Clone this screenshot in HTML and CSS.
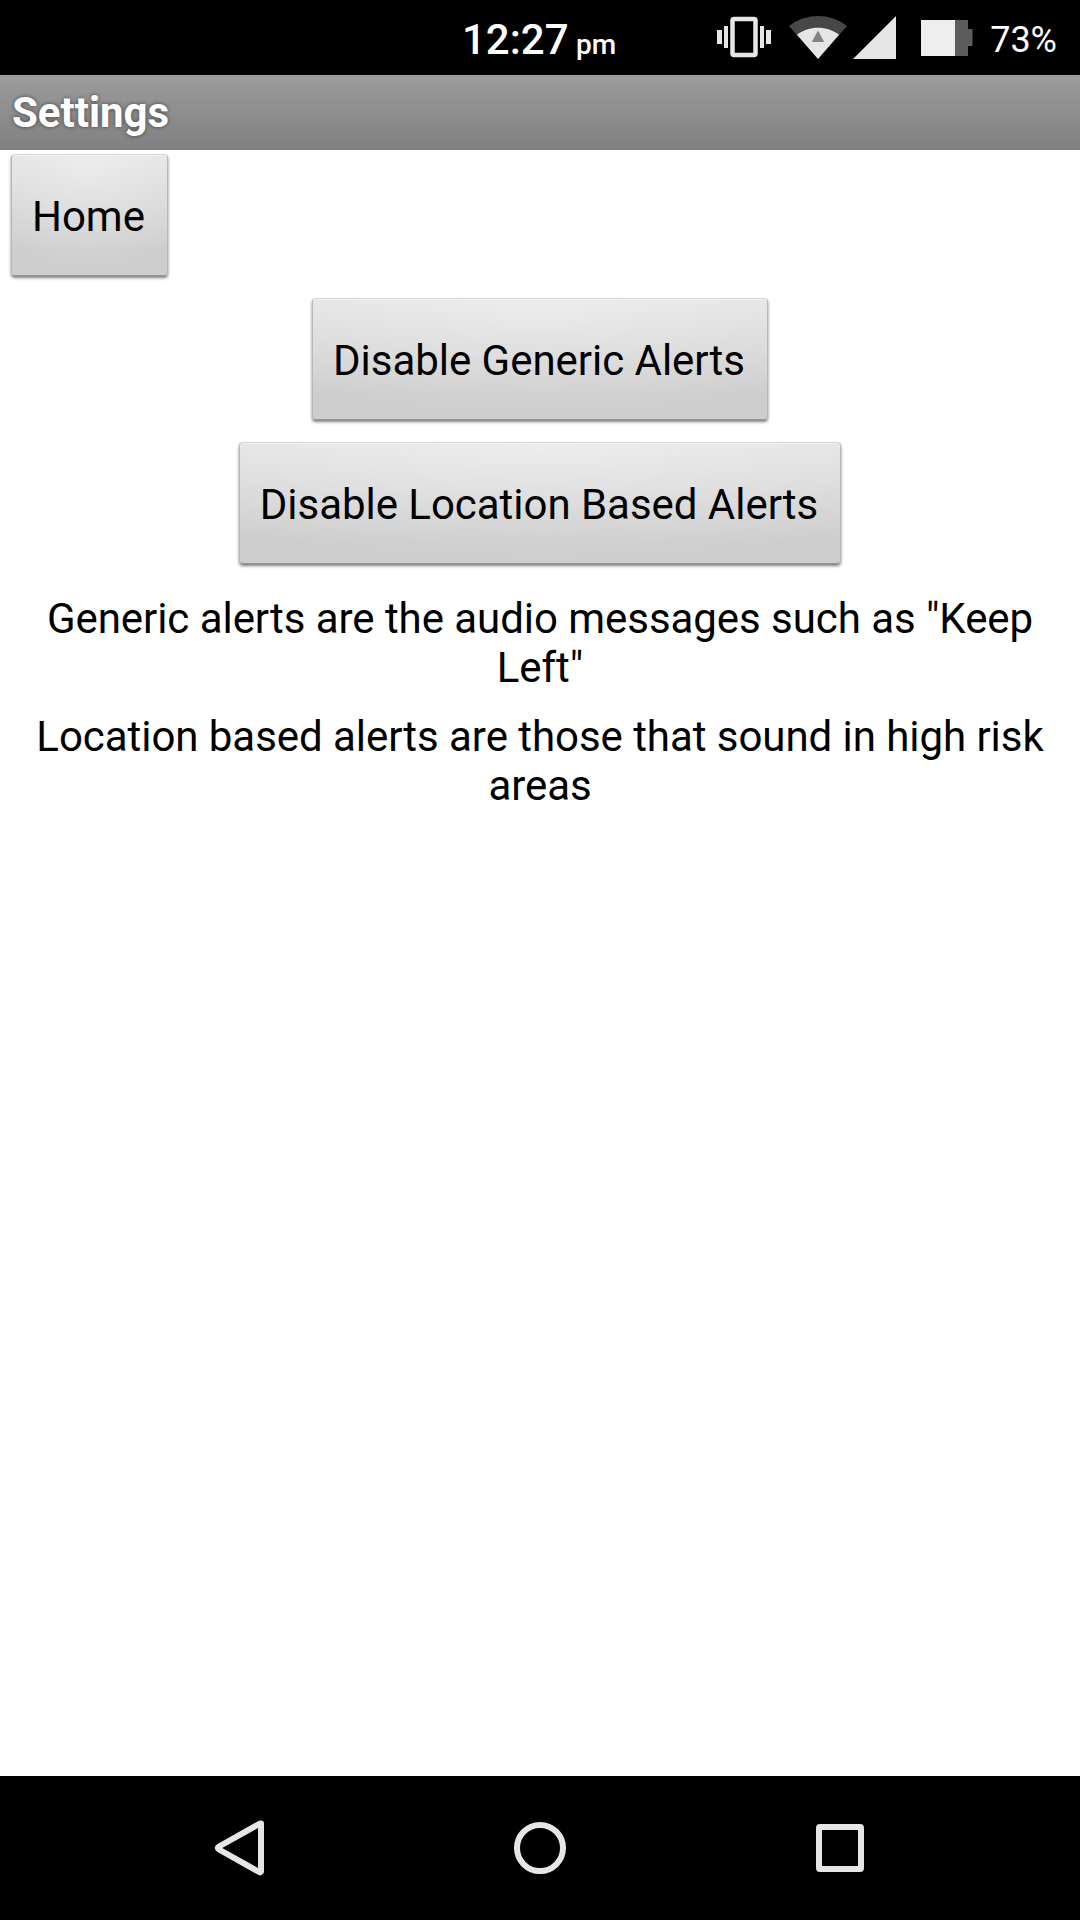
FILE: index.html
```html
<!DOCTYPE html>
<html lang="en">
<head>
<meta charset="utf-8">
<title>Settings</title>
<link rel="stylesheet" href="styles.css">
</head>
<body>
<div class="screen">
  <div class="status-bar">
    <div class="clock">12:27 <span class="meridiem">pm</span></div>
    <div class="indicators">
      <svg class="vibrate" width="54" height="42" viewBox="0 0 54 42" fill="#e6e6e6">
        <path d="M0 14h5v14H0zM7 10h4v22H7zM43 10h4v22h-4zM49 14h5v14h-5z"/>
        <rect x="15.500" y="3" width="23" height="36" rx="1.5" fill="none" stroke="#e6e6e6" stroke-width="4.5"/>
      </svg>
      <svg class="wifi" width="58" height="43" viewBox="0 0 58 43">
        <path d="M0 10C17-3.300 41-3.300 58 10L29 43Z" fill="#474747"/>
        <path d="M8 18.700C20 9.500 38 9.500 50 18.700L29 43Z" fill="#e6e6e6"/>
        <path d="M29 14.500L35.200 26H22.800Z" fill="#828282"/>
      </svg>
      <svg class="signal" width="43" height="43" viewBox="0 0 43 43"><path d="M43 0V43H0Z" fill="#e6e6e6"/></svg>
      <svg class="battery" width="52" height="36" viewBox="0 0 52 36">
        <path d="M34 0H47V9H51.500V26H47V36H34Z" fill="#5c5c5c"/>
        <path d="M0 0H34V36H0Z" fill="#eee"/>
      </svg>
      <span class="percent">73%</span>
    </div>
  </div>
  <h1 class="title-bar">Settings</h1>
  <main class="content">
    <button class="btn btn-home">Home</button>
    <button class="btn">Disable Generic Alerts</button>
    <button class="btn">Disable Location Based Alerts</button>
    <p class="note">Generic alerts are the audio messages such as "Keep Left"</p>
    <p class="note">Location based alerts are those that sound in high risk areas</p>
  </main>
  <nav class="nav-bar">
    <svg width="60" height="60" viewBox="0 0 60 60" fill="none" stroke="#e6e6e6" stroke-width="6" stroke-linejoin="round"><path d="M51 5.500V53.500L50 54.500L9 31.500Q6.500 30 9 28.500L50 5.500Z"/></svg>
    <svg width="60" height="60" viewBox="0 0 60 60" fill="none" stroke="#e6e6e6" stroke-width="6"><circle cx="30" cy="30" r="23"/></svg>
    <svg width="60" height="60" viewBox="0 0 60 60" fill="none" stroke="#e6e6e6" stroke-width="6" stroke-linejoin="round"><rect x="9" y="9" width="42" height="42" rx="1"/></svg>
  </nav>
</div>
</body>
</html>
```
FILE: styles.css
```css
* { box-sizing: border-box; }
body {
  margin: 0;
  background: #fff;
  color: #000;
  font-family: Roboto, sans-serif;
}
.screen {
  display: flex;
  flex-direction: column;
  width: 1080px;
  height: 1920px;
}
.status-bar {
  display: grid;
  grid-template-columns: 462px 1fr auto;
  height: 75px;
  padding-right: 23px;
  background: #000;
  color: #fff;
}
.clock {
  grid-column: 2;
  padding-top: 15px;
  font-size: 42px;
  font-weight: 500;
  line-height: 49px;
  white-space: nowrap;
}
.meridiem { margin-left: -3px; font-size: 28px; }
.indicators {
  display: flex;
  align-items: flex-start;
  padding-top: 16px;
}
.wifi { margin-left: 18px; }
.signal { margin-left: 6px; }
.battery { margin: 4px 0 0 25px; }
.percent {
  margin: 3px 0 0 17px;
  font-size: 36px;
  line-height: 42px;
}
.title-bar {
  height: 75px;
  margin: 0;
  padding: 13px 12px 0;
  background: linear-gradient(#9c9c9c, #808080);
  color: #fff;
  font-size: 42px;
  font-weight: 700;
  line-height: 49px;
  text-shadow: 0 0 4px rgba(0, 0, 0, .55);
}
.content {
  flex: 1;
  display: flex;
  flex-direction: column;
  align-items: center;
  padding: 4px 24px 0;
}
.btn {
  height: 122px;
  margin: 0 0 22px;
  padding: 3px 22px 0 20px;
  border: 1px solid;
  border-color: #d8d8d8 #b8b8b8 #929292;
  border-radius: 4px;
  background:
    radial-gradient(ellipse 75% 100% at 50% 0, rgba(255, 255, 255, .35), rgba(255, 255, 255, 0)),
    linear-gradient(#e4e4e4, #cecece 80%);
  box-shadow: 0 2px 3px rgba(0, 0, 0, .5), inset 0 1px 1px rgba(255, 255, 255, .4);
  color: #000;
  font: 42px/49px Roboto, sans-serif;
  letter-spacing: -.03px;
}
.btn-home { align-self: flex-start; margin-left: -13px; }
.note {
  margin: 0 0 20px;
  font-size: 42px;
  line-height: 49px;
  letter-spacing: -.05px;
  text-align: center;
}
.btn + .note { margin-top: 8px; }
.nav-bar {
  display: flex;
  justify-content: center;
  gap: 240px;
  height: 144px;
  padding-top: 42px;
  background: #000;
}
```
